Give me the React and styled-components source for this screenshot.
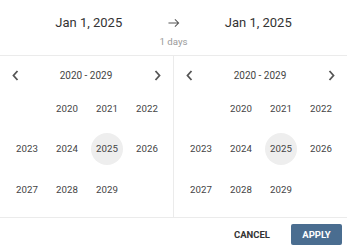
import React from "react";
import styled, { createGlobalStyle } from "styled-components";

const GlobalStyle = createGlobalStyle`
  body {
    margin: 0;
    background: #fff;
    font-family: Roboto, "Liberation Sans", sans-serif;
  }
`;

const Picker = styled.div`
  width: 347px;
  height: 250px;
  display: flex;
  flex-direction: column;
  background: #fff;
`;

const Header = styled.div`
  height: 56px;
  box-sizing: border-box;
  border-bottom: 1px solid #ebebeb;
  display: grid;
  grid-template-columns: 1fr 12px 1fr;
  grid-template-rows: 34px 1fr;
  padding: 0 10px;
  align-items: end;
`;

const DateText = styled.div`
  font-size: 13px;
  color: #333;
  text-align: center;
  line-height: 16px;
  padding-bottom: 3px;
`;

const Arrow = styled.div`
  display: flex;
  justify-content: center;
  padding-bottom: 6px;
`;

const Duration = styled.div`
  grid-column: 1 / 4;
  text-align: center;
  font-size: 9.7px;
  color: #9a9a9a;
  align-self: start;
  padding-top: 2px;
`;

const Panels = styled.div`
  display: flex;
  height: 162px;
  border-bottom: 1px solid #ebebeb;
  box-sizing: border-box;
`;

const Panel = styled.div`
  width: ${(p) => (p.$first ? "174px" : "173px")};
  box-sizing: border-box;
  border-right: ${(p) => (p.$first ? "1px solid #ebebeb" : "none")};
  padding: 0 0 0 11px;
`;

const Nav = styled.div`
  height: 36px;
  box-sizing: border-box;
  padding: 3px 11px 0 0;
  margin-left: -1px;
  display: flex;
  align-items: center;
  justify-content: space-between;
`;

const NavButton = styled.div`
  width: 10px;
  height: 12px;
  display: flex;
  align-items: center;
  justify-content: center;
`;

const NavTitle = styled.div`
  font-size: 10px;
  color: #444;
`;

const YearGrid = styled.div`
  display: grid;
  grid-template-columns: repeat(4, 32px);
  grid-auto-rows: 32px;
  column-gap: 8px;
  row-gap: 8.5px;
`;

const Year = styled.div`
  width: 32px;
  height: 32px;
  border-radius: 50%;
  display: flex;
  align-items: center;
  justify-content: center;
  font-size: 9.7px;
  color: #444;
  background: ${(p) => (p.$selected ? "#eeeeee" : "transparent")};
`;

const Footer = styled.div`
  flex: 1;
  display: flex;
  align-items: center;
  justify-content: flex-end;
  padding: 1px 5px 0 0;
  gap: 11px;
`;

const Button = styled.button`
  font-family: inherit;
  font-size: 9.5px;
  font-weight: 700;
  border: none;
  border-radius: 2px;
  height: 21px;
  padding: 0 10px;
  width: ${(p) => (p.$primary ? "51px" : "auto")};
  background: ${(p) => (p.$primary ? "#4a6d90" : "transparent")};
  color: ${(p) => (p.$primary ? "#fff" : "#333")};
`;

const Chevron = ({ dir }) => (
  <svg width="7" height="11" viewBox="0 0 7 11">
    <path
      d={dir === "left" ? "M5.5 1 L1.5 5.5 L5.5 10" : "M1.5 1 L5.5 5.5 L1.5 10"}
      fill="none"
      stroke="#555"
      strokeWidth="1.8"
    />
  </svg>
);

const years = [null, 2020, 2021, 2022, 2023, 2024, 2025, 2026, 2027, 2028, 2029];

const DecadePanel = ({ first }) => (
  <Panel $first={first}>
    <Nav>
      <NavButton>
        <Chevron dir="left" />
      </NavButton>
      <NavTitle>2020 - 2029</NavTitle>
      <NavButton>
        <Chevron dir="right" />
      </NavButton>
    </Nav>
    <YearGrid>
      {years.map((y, i) => (
        <Year key={i} $selected={y === 2025}>
          {y}
        </Year>
      ))}
    </YearGrid>
  </Panel>
);

export default function App() {
  return (
    <>
      <GlobalStyle />
      <Picker>
        <Header>
          <DateText>Jan 1, 2025</DateText>
          <Arrow>
            <svg width="13" height="10" viewBox="0 0 13 10">
              <path d="M0.5 5 H11.5 M7.5 1 L11.5 5 L7.5 9" fill="none" stroke="#555" strokeWidth="1.1" />
            </svg>
          </Arrow>
          <DateText>Jan 1, 2025</DateText>
          <Duration>1 days</Duration>
        </Header>
        <Panels>
          <DecadePanel first />
          <DecadePanel />
        </Panels>
        <Footer>
          <Button>CANCEL</Button>
          <Button $primary>APPLY</Button>
        </Footer>
      </Picker>
    </>
  );
}
